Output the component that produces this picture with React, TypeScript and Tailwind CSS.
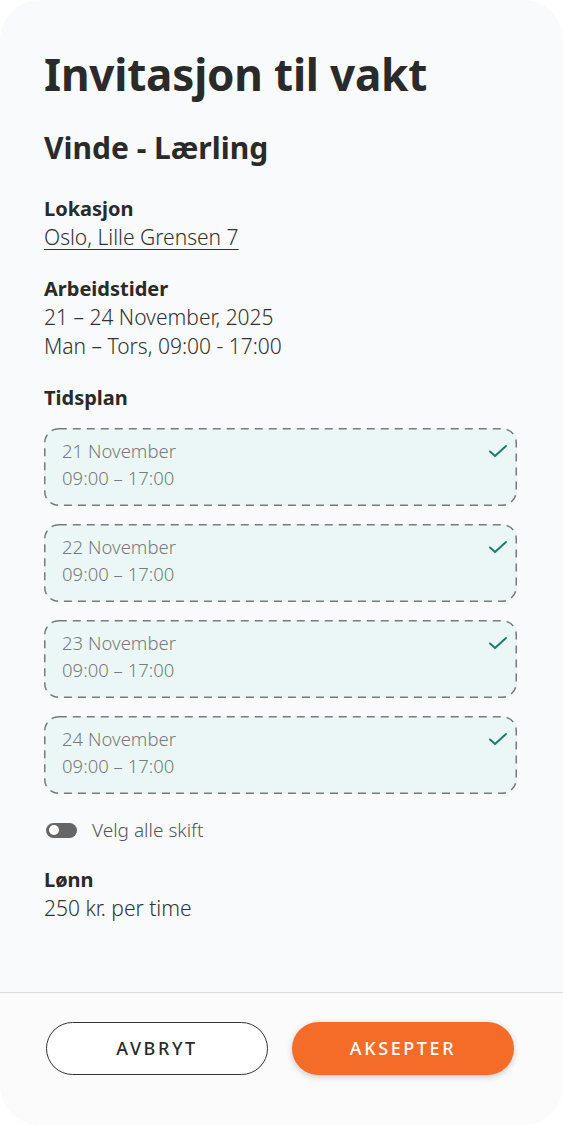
import React from "react";

const font = { fontFamily: "'Noto Sans', 'Open Sans', sans-serif" };

function Check() {
  return (
    <svg width="20" height="14" viewBox="0 0 20 14" fill="none">
      <path d="M2 7.5 L7 12 L18 2" stroke="#1b7d6d" strokeWidth="2" strokeLinecap="round" strokeLinejoin="round" />
    </svg>
  );
}

function DashedBorder() {
  return (
    <svg className="absolute inset-0 w-full h-full pointer-events-none" preserveAspectRatio="none">
      <rect
        x="0.75"
        y="0.75"
        width="calc(100% - 1.5px)"
        height="calc(100% - 1.5px)"
        rx="14"
        ry="14"
        fill="none"
        stroke="#7a7a7a"
        strokeWidth="1.5"
        strokeDasharray="8 6"
      />
    </svg>
  );
}

const shifts = ["21 November", "22 November", "23 November", "24 November"];

export default function App() {
  return (
    <div className="min-h-screen bg-white" style={font}>
      <div className="h-[1125px] rounded-[40px] bg-[#f8fafc] flex flex-col overflow-hidden">
        <main className="flex-1 pl-[44px] pr-[46px] pt-[44px]">
          <h1 className="text-[44px] leading-[60px] font-bold text-[#2a2a2a] tracking-[-0.2px]">Invitasjon til vakt</h1>
          <h2 className="mt-[24px] text-[30px] leading-[40px] font-bold text-[#2a2a2a]">Vinde - Lærling</h2>

          <div className="mt-[27px]">
            <div className="text-[20px] leading-[28px] font-bold text-[#2a2a2a]">Lokasjon</div>
            <a className="text-[21px] leading-[28px] font-light text-[#333] underline underline-offset-[4px] decoration-[1px]">Oslo, Lille Grensen 7</a>
          </div>

          <div className="mt-[24px]">
            <div className="text-[20px] leading-[28px] font-bold text-[#2a2a2a]">Arbeidstider</div>
            <div className="text-[21px] leading-[29px] font-light text-[#333]">21 – 24 November, 2025</div>
            <div className="text-[21px] leading-[28px] font-light text-[#333]">Man – Tors, 09:00 - 17:00</div>
          </div>

          <div className="mt-[24px]">
            <div className="text-[20px] leading-[28px] font-bold text-[#2a2a2a]">Tidsplan</div>
            <div className="mt-[16px] flex flex-col gap-[18px]">
              {shifts.map((d) => (
                <div
                  key={d}
                  className="relative h-[78px] rounded-[14px] bg-[#ebf7f6] pl-[18px] pr-[9px] pt-[9px] flex justify-between"
                >
                  <DashedBorder />
                  <div className="text-[18.5px] leading-[27px] font-light text-[#7a7a7a]">
                    <div>{d}</div>
                    <div>09:00 – 17:00</div>
                  </div>
                  <div className="pt-[7px]">
                    <Check />
                  </div>
                </div>
              ))}
            </div>
          </div>

          <div className="mt-[23px] ml-[2px] flex items-center gap-[15px]">
            <div className="w-[31px] h-[15px] rounded-full bg-[#666] flex items-center pl-[3px]">
              <div className="w-[10px] h-[10px] rounded-full bg-white" />
            </div>
            <div className="text-[19px] leading-[26px] font-light text-[#555]">Velg alle skift</div>
          </div>

          <div className="mt-[23px]">
            <div className="text-[20px] leading-[28px] font-bold text-[#2a2a2a]">Lønn</div>
            <div className="text-[21px] leading-[28px] font-light text-[#333]">250 kr. per time</div>
          </div>
        </main>

        <footer className="h-[133px] border-t border-[#dcdcdc] bg-[#fbfbfb] px-[46px] pt-[29px] flex gap-[24px]">
          <button className="w-[222px] h-[53px] rounded-full border-[1.5px] border-[#333] bg-white text-[18px] font-medium tracking-[2.6px] text-[#2a2a2a]">
            AVBRYT
          </button>
          <button className="w-[222px] h-[53px] rounded-full bg-[#f46c28] text-[18px] font-medium tracking-[2.6px] text-white shadow-[0_2px_6px_rgba(0,0,0,0.2)]">
            AKSEPTER
          </button>
        </footer>
      </div>
    </div>
  );
}
